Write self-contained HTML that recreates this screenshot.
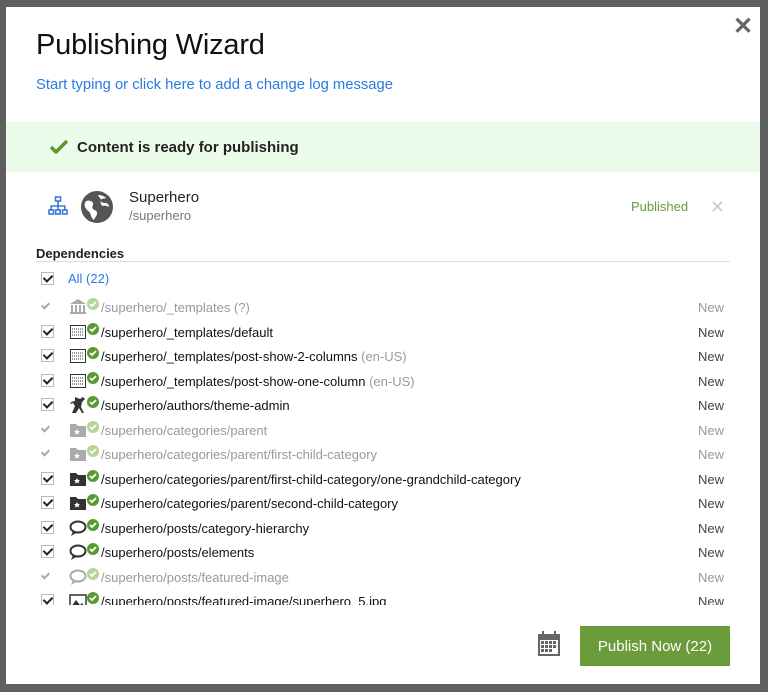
<!DOCTYPE html>
<html><head><meta charset="utf-8"><style>
*{box-sizing:border-box;margin:0;padding:0}
body{width:768px;height:692px;background:#5f5f5f;font-family:"Liberation Sans",sans-serif;position:relative;overflow:hidden}
.dlg{position:absolute;left:6px;top:7px;width:754px;height:677px;background:#fff}
h1{position:absolute;left:30px;top:22px;font-size:29px;font-weight:normal;color:#111;letter-spacing:-0.2px}
.link{position:absolute;left:30px;top:70px;font-size:14.8px;color:#2a7ae2}
.close{position:absolute;left:727px;top:5px;font-size:24px;color:#666;font-weight:bold}
.band{position:absolute;left:0;top:115px;width:754px;height:50px;background:#ecfcea}
.band .t{position:absolute;left:71px;top:17px;font-size:15px;font-weight:bold;color:#222}
.band svg{position:absolute;left:44px;top:17px}
.item{position:absolute;left:123px;top:182px}
.item .n{font-size:15px;color:#222}
.item .p{font-size:13px;color:#777;margin-top:2px}
.pub{position:absolute;left:625px;top:192px;font-size:13px;color:#6a9a3a}
.x2{position:absolute;left:704px;top:190px;font-size:18px;color:#ccc}
.dep{position:absolute;left:30px;top:239px;font-size:13px;font-weight:bold;color:#222}
.hr{position:absolute;left:30px;top:254px;width:694px;height:1px;background:#ddd}
.cb{position:absolute;width:13px;height:13px;border:1px solid #bbb;background:#fff}
.cb:after{content:"";position:absolute;left:3px;top:0px;width:4px;height:7px;border:solid #222;border-width:0 2px 2px 0;transform:rotate(45deg)}
.ck{position:absolute;width:5px;height:8px;border:solid #aaa;border-width:0 2px 2px 0;transform:rotate(45deg)}
.all{position:absolute;left:62px;top:264px;font-size:13px;color:#2a7ae2}
.list{position:absolute;left:0;top:281px;width:754px;height:317px;overflow:hidden}
.row{position:absolute;left:0;width:754px;height:24px}
.row .tx{position:absolute;left:95px;top:3px;font-size:13px;color:#111;white-space:nowrap}
.row.g .tx{color:#999}
.row .lc{color:#999}
.row .st{position:absolute;right:36px;top:3px;font-size:13px;color:#444}
.row.g .st{color:#999}
.row .ic{position:absolute;left:63px;top:1px}
.btn{position:absolute;left:574px;top:619px;width:150px;height:40px;background:#6b9b3a;color:#fff;font-size:15px;text-align:center;line-height:42px}
</style></head><body>
<div class="dlg">
<h1>Publishing Wizard</h1>
<div class="link">Start typing or click here to add a change log message</div>
<div class="close">✕</div>
<div class="band"><svg width="18" height="15" viewBox="0 0 18 15"><path d="M1 8l5 5L17 2" stroke="#5a9a32" stroke-width="3.5" fill="none"/></svg><div class="t">Content is ready for publishing</div></div>
<svg style="position:absolute;left:42px;top:189px" width="20" height="20" viewBox="0 0 20 20" fill="none" stroke="#3a7bd5" stroke-width="1.6"><rect x="7.5" y="1" width="5" height="4"/><rect x="1" y="14" width="4.5" height="4"/><rect x="7.7" y="14" width="4.5" height="4"/><rect x="14.5" y="14" width="4.5" height="4"/><path d="M10 5v9M3.2 14v-4h13.6v4"/></svg>
<svg style="position:absolute;left:74px;top:183px" width="34" height="34" viewBox="0 0 34 34"><circle cx="17" cy="17" r="16" fill="#555"/><path d="M6 11c3-1 6 0 7 2s-2 4 0 6 4 1 4 4-2 4-3 7c-3-2-3-5-4-7s-4-3-5-6 0-4 1-6zM18 5c3 0 6 1 8 3-2 1-4 0-5 2s2 3 4 3 4 1 4 4c-2-1-4-2-6-1-2-1-3-3-2-5s-2-3-3-6z" fill="#fff"/></svg>
<div class="item"><div class="n">Superhero</div><div class="p">/superhero</div></div>
<div class="pub">Published</div>
<div class="x2">✕</div>
<div class="dep">Dependencies</div>
<div class="hr"></div>
<div class="cb" style="left:35px;top:265px"></div>
<div class="all">All (22)</div>
<div class="list" id="L"></div>
<svg style="position:absolute;left:531px;top:624px" width="24" height="26" viewBox="0 0 24 26"><rect x="1" y="3" width="22" height="22" fill="#666"/><rect x="5" y="0" width="2" height="5" fill="#666"/><rect x="17" y="0" width="2" height="5" fill="#666"/><rect x="3" y="9" width="18" height="14" fill="#fff"/><g fill="#666"><rect x="4" y="10" width="3" height="3"/><rect x="8" y="10" width="3" height="3"/><rect x="12" y="10" width="3" height="3"/><rect x="16" y="10" width="3" height="3"/><rect x="4" y="14" width="3" height="3"/><rect x="8" y="14" width="3" height="3"/><rect x="12" y="14" width="3" height="3"/><rect x="16" y="14" width="3" height="3"/><rect x="4" y="18" width="3" height="3"/><rect x="8" y="18" width="3" height="3"/><rect x="12" y="18" width="3" height="3"/></g></svg>
<div class="btn">Publish Now (22)</div>
</div>
<script>
var rows=[
["/superhero/_templates"," (?)",1,"col"],
["/superhero/_templates/default","",0,"grid"],
["/superhero/_templates/post-show-2-columns"," (en-US)",0,"grid"],
["/superhero/_templates/post-show-one-column"," (en-US)",0,"grid"],
["/superhero/authors/theme-admin","",0,"run"],
["/superhero/categories/parent","",1,"fold"],
["/superhero/categories/parent/first-child-category","",1,"fold"],
["/superhero/categories/parent/first-child-category/one-grandchild-category","",0,"fold"],
["/superhero/categories/parent/second-child-category","",0,"fold"],
["/superhero/posts/category-hierarchy","",0,"bub"],
["/superhero/posts/elements","",0,"bub"],
["/superhero/posts/featured-image","",1,"bub"],
["/superhero/posts/featured-image/superhero_5.jpg","",0,"img"]];
function icon(t,g){var c=g?"#aaa":"#333",s="";
if(t=="col")s='<path d="M1 6L9 1l8 5z" fill="'+c+'"/><rect x="2" y="7" width="2" height="7" fill="'+c+'"/><rect x="6" y="7" width="2" height="7" fill="'+c+'"/><rect x="10" y="7" width="2" height="7" fill="'+c+'"/><rect x="14" y="7" width="2" height="7" fill="'+c+'"/><rect x="1" y="14" width="16" height="2" fill="'+c+'"/>';
if(t=="grid")s='<rect x="1.5" y="2.5" width="15" height="13" fill="#fff" stroke="'+c+'"/><path d="M3 6h12M3 9h12M3 12h12" stroke="'+c+'" stroke-dasharray="1 1"/>';
if(t=="run")s='<path d="M6 1l5 2 3-2 2 2-3 3-1 5 3 6h-2l-3-5-3 5H3l3-7-2-3-3 1 1-2 4-1z" fill="'+c+'"/>';
if(t=="fold")s='<path d="M1 3h6l2 2h8v11H1z" fill="'+c+'"/><path d="M8 8l1 2h2l-1.5 1.5.5 2-2-1-2 1 .5-2L5 10h2z" fill="#fff"/>';
if(t=="bub")s='<ellipse cx="9" cy="8" rx="7.5" ry="5.5" fill="#fff" stroke="'+c+'" stroke-width="2"/><path d="M4 12l-2 5 5-3" fill="'+c+'"/>';
if(t=="img")s='<rect x="1" y="3" width="16" height="13" fill="#fff" stroke="'+c+'" stroke-width="1.5"/><path d="M2 15l5-7 4 5 2-2 3 4z" fill="'+c+'"/>';
var gc=g?"#b5d69a":"#5a9a32";
return '<svg class="ic" width="32" height="20" viewBox="0 0 32 20">'+s+'<circle cx="24" cy="6" r="6" fill="'+gc+'"/><path d="M21 6l2 2 4-4" stroke="#fff" stroke-width="1.8" fill="none"/></svg>';}
var h="";rows.forEach(function(r,i){var y=9+i*24.5;
h+='<div class="row'+(r[2]?' g':'')+'" style="top:'+y+'px">'+(r[2]?'<div class="ck" style="left:37px;top:4px"></div>':'<div class="cb" style="left:35px;top:3px"></div>')+icon(r[3],r[2])+'<div class="tx">'+r[0]+'<span class="lc">'+r[1]+'</span></div><div class="st">New</div></div>';});
document.getElementById("L").innerHTML=h;
</script>
</body></html>
